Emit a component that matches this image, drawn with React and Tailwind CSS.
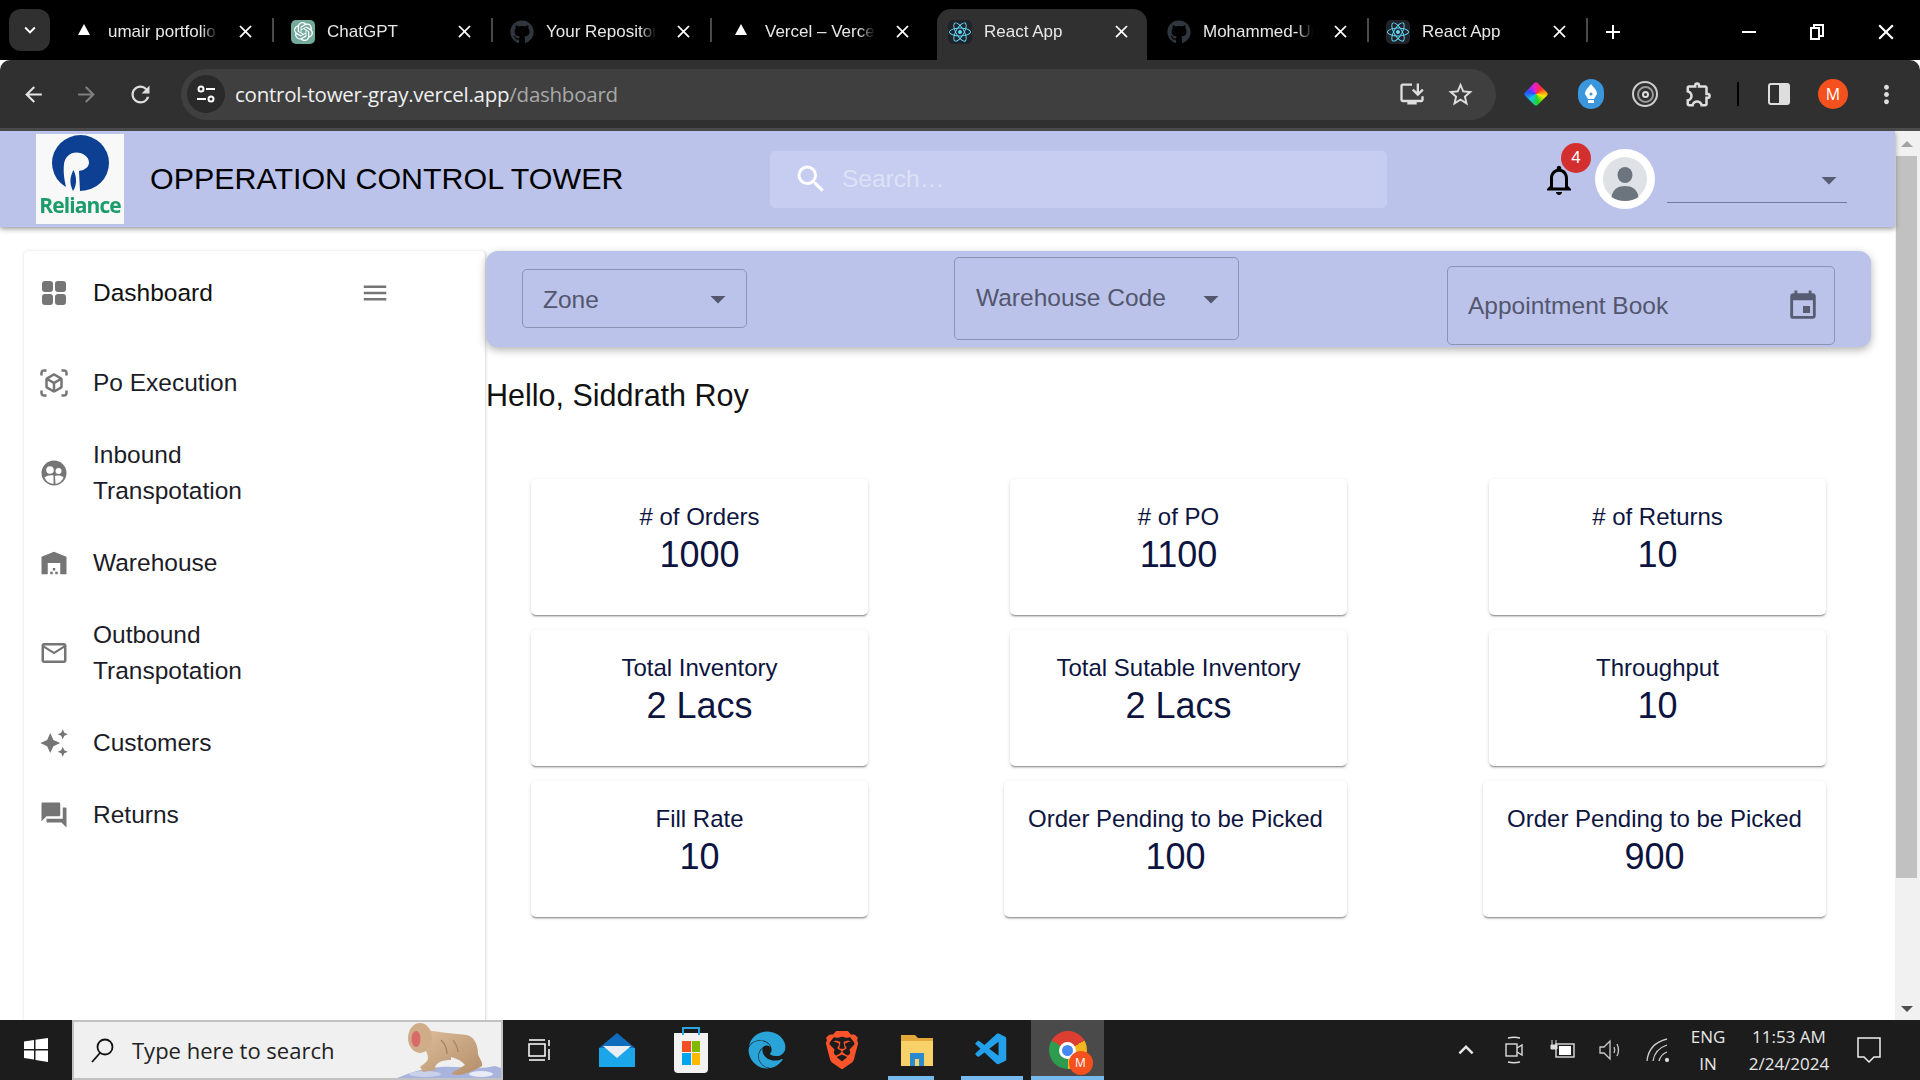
import {
  MdAdd,
  MdArrowBack,
  MdArrowDropDown,
  MdArrowForward,
  MdAutoAwesome,
  MdClose,
  MdEvent,
  MdForum,
  MdInstallDesktop,
  MdKeyboardArrowDown,
  MdKeyboardArrowUp,
  MdMailOutline,
  MdMenu,
  MdMoreVert,
  MdOutlineExtension,
  MdOutlineViewInAr,
  MdRefresh,
  MdSearch,
  MdStarBorder,
  MdWarehouse,
} from "react-icons/md";
import { FaEdge, FaGithub, FaReact } from "react-icons/fa";
import { SiBrave, SiOpenai } from "react-icons/si";
import { VscVscode } from "react-icons/vsc";

const tabs = [
  { title: "umair portfolio", icon: "vercel" },
  { title: "ChatGPT", icon: "gpt" },
  { title: "Your Repositories", icon: "github" },
  { title: "Vercel – Vercel", icon: "vercel" },
  { title: "React App", icon: "react", active: true },
  { title: "Mohammed-Umair", icon: "github" },
  { title: "React App", icon: "react" },
];

const navItems = [
  { label: "Po Execution", icon: <MdOutlineViewInAr size={30} /> },
  { label: "Inbound Transpotation", icon: <DiversityIcon /> },
  { label: "Warehouse", icon: <MdWarehouse size={30} /> },
  { label: "Outbound Transpotation", icon: <MdMailOutline size={30} /> },
  { label: "Customers", icon: <MdAutoAwesome size={30} /> },
  { label: "Returns", icon: <MdForum size={30} /> },
];

const stats = [
  { label: "# of Orders", value: "1000" },
  { label: "# of PO", value: "1100" },
  { label: "# of Returns", value: "10" },
  { label: "Total Inventory", value: "2 Lacs" },
  { label: "Total Sutable Inventory", value: "2 Lacs" },
  { label: "Throughput", value: "10" },
  { label: "Fill Rate", value: "10" },
  { label: "Order Pending to be Picked", value: "100", wide: true },
  { label: "Order Pending to be Picked", value: "900", wide: true },
];

function DiversityIcon() {
  return (
    <svg width="30" height="30" viewBox="0 0 30 30">
      <circle cx="15" cy="15" r="12.5" fill="#757575" />
      <circle cx="11" cy="12" r="3.8" fill="#fff" />
      <circle cx="19.5" cy="13" r="3" fill="#fff" />
      <path d="M5.500 19.500C8 17.500 11 17 14.500 17.500L14.500 26C10 25.500 7 23 5.500 19.500z" fill="#fff" />
      <path d="M16 18C19 17 22.500 17.500 24.500 19.500 23 23 20 25.500 16.500 26z" fill="#fff" />
    </svg>
  );
}

function TabIcon({ type }) {
  if (type === "vercel") {
    return (
      <div className="w-0 h-0 border-x-[6px] border-x-transparent border-b-[11px] border-b-white mb-1" />
    );
  }
  if (type === "gpt") {
    return (
      <div className="w-[24px] h-[24px] rounded-[5px] bg-[#74aa9c] flex items-center justify-center text-white">
        <SiOpenai size={19} />
      </div>
    );
  }
  if (type === "github") {
    return <FaGithub size={24} className="text-[#30363d]" />;
  }
  return (
    <div className="w-[24px] h-[24px] rounded-[5px] bg-[#20232a] flex items-center justify-center text-[#61dafb]">
      <FaReact size={22} />
    </div>
  );
}

function Tab({ tab, showDivider }) {
  return (
    <div className="relative w-[219px] h-[51px] flex items-center pl-[7px] pb-[6px]">
      {tab.active && <div className="absolute left-[-4px] right-[13px] top-0 bottom-0 bg-[#303030] rounded-t-[14px]" />}
      <div className="relative w-[24px] flex items-center justify-center shrink-0">
        <TabIcon type={tab.icon} />
      </div>
      <span className="relative ml-[12px] w-[110px] overflow-hidden whitespace-nowrap text-[17px] text-[#e8e8e8] [mask-image:linear-gradient(to_right,black_85%,transparent)]">
        {tab.title}
      </span>
      <MdClose size={21} className="relative ml-[17px] text-white shrink-0" />
      {showDivider && <div className="absolute right-[10px] top-[9px] h-[24px] w-[2px] bg-[#4a4a4a]" />}
    </div>
  );
}

function BrowserTabs() {
  return (
    <div className="h-[60px] bg-black flex items-end shrink-0 relative">
      <div className="absolute left-[9px] top-[9px] w-[41px] h-[42px] rounded-[12px] bg-[#303030] flex items-center justify-center text-white">
        <MdKeyboardArrowDown size={22} />
      </div>
      <div className="ml-[65px] flex">
        {tabs.map((tab, i) => (
          <Tab key={i} tab={tab} showDivider={i !== 3 && i !== 4} />
        ))}
      </div>
      <div className="h-[51px] pb-[6px] flex items-center text-white">
        <MdAdd size={24} className="ml-[3px]" />
        <div className="ml-[117px] w-[14px] h-[2px] bg-white" />
        <div className="ml-[54px] relative w-[14px] h-[16px]">
          <div className="absolute right-0 top-0 w-[11px] h-[13px] border-2 border-white" />
          <div className="absolute left-0 bottom-0 w-[10px] h-[13px] border-2 border-white bg-black" />
        </div>
        <MdClose size={26} className="ml-[49px]" />
      </div>
    </div>
  );
}

function BrowserToolbar() {
  return (
    <div className="h-[71px] bg-[#303030] border-b-[3px] border-[#4c4c4c] rounded-t-[10px] flex items-center shrink-0 text-[#dedede]">
      <MdArrowBack size={25} className="ml-[21px] text-[#e4e4e4]" />
      <MdArrowForward size={25} className="ml-[28px] text-[#7f7f7f]" />
      <MdRefresh size={27} className="ml-[28px]" />
      <div className="ml-[27px] w-[1315px] h-[51px] rounded-full bg-[#3f3f3f] flex items-center">
        <div className="ml-[6px] w-[38px] h-[38px] rounded-full bg-[#2a2a2a] flex items-center justify-center">
          <svg width="22" height="22" viewBox="0 0 22 22" fill="none" stroke="#fff" strokeWidth="2">
            <circle cx="6" cy="6" r="2.500" />
            <path d="M11 6h9M2 16h9" />
            <circle cx="16" cy="16" r="2.500" />
          </svg>
        </div>
        <span className="ml-[10px] text-[20.5px] text-[#f0f0f0] font-['Open_Sans',sans-serif] tracking-[-0.25px]">
          control-tower-gray.vercel.app<span className="text-[#a9a9a9]">/dashboard</span>
        </span>
        <MdInstallDesktop size={28} className="ml-auto" />
        <MdStarBorder size={29} className="ml-[20px] mr-[21px]" />
      </div>
      <div className="ml-[31px] w-[18px] h-[18px] rotate-45 rounded-[3px] bg-[conic-gradient(#ff2d2d,#ffe600,#21d321,#12c9e8,#2b4bff,#e81cd8,#ff2d2d)]" />
      <div className="ml-[33px] w-[26px] h-[30px] rounded-full bg-[#3a96dd] flex items-center justify-center">
        <svg width="14" height="20" viewBox="0 0 14 20" fill="#fff">
          <path d="M7 0c3 4 6 6 6 10l-3 5H4l-3-5c0-4 3-6 6-10zM4 16h6v3H4z" />
          <circle cx="7" cy="10" r="1.500" fill="#3a96dd" />
        </svg>
      </div>
      <div className="ml-[28px] w-[26px] h-[26px] rounded-full border-2 border-[#cfcfcf] flex items-center justify-center">
        <div className="w-[17px] h-[17px] rounded-full border-2 border-[#9a9a9a] flex items-center justify-center">
          <div className="w-[7px] h-[7px] rounded-full border-2 border-[#dedede]" />
        </div>
      </div>
      <MdOutlineExtension size={30} className="ml-[26px]" />
      <div className="ml-[23px] w-[2px] h-[24px] bg-black" />
      <div className="ml-[29px] w-[22px] h-[22px] rounded-[3px] border-2 border-[#dedede] flex justify-end">
        <div className="w-[9px] bg-[#dedede]" />
      </div>
      <div className="ml-[28px] w-[30px] h-[30px] rounded-full bg-[#f4511e] text-white text-[16px] flex items-center justify-center font-['Open_Sans',sans-serif]">
        M
      </div>
      <MdMoreVert size={29} className="ml-[24px]" />
    </div>
  );
}

function RelianceLogo() {
  return (
    <div className="w-[88px] h-[90px] bg-[#f7f8f7] flex flex-col items-center shrink-0">
      <svg width="57" height="56" viewBox="0 0 57 56" className="mt-[1px] mb-[2px] blur-[0.3px]">
        <ellipse cx="28.500" cy="28" rx="28.500" ry="28" fill="#0d4093" />
        <path
          d="M24.500 17.500C31 17.500 37 22 37 27.500C37 32 33 35 27 36L28 56H15C12.500 46 11 38 12 29C13 22 18 17.500 24.500 17.500z"
          fill="#f7f8f7"
        />
        <path d="M21 56C17 48 18 42 21.500 35 25 42 25 50 21 56z" fill="#0d4093" />
      </svg>
      <span className="text-[21px] leading-[24px] font-bold text-[#1b9c6a] tracking-[-0.9px] font-['Open_Sans',sans-serif] blur-[0.3px]">
        Reliance
      </span>
    </div>
  );
}

function AppHeader() {
  return (
    <div className="relative z-10 h-[96px] bg-[#bbc3ea] flex items-center shrink-0 shadow-[0_2px_5px_rgba(0,0,0,0.4)]">
      <div className="ml-[36px]">
        <RelianceLogo />
      </div>
      <h1 className="ml-[26px] w-[620px] text-[30.4px] text-black font-normal whitespace-nowrap">
        OPPERATION CONTROL TOWER
      </h1>
      <div className="w-[617px] h-[57px] rounded-[5px] bg-[#c6cdf0] flex items-center">
        <MdSearch size={36} className="ml-[23px] text-white" />
        <span className="ml-[13px] text-[24.5px] text-[#dde1f6]">Search…</span>
      </div>
      <div className="relative ml-[154px] mt-[1px] text-black">
        <svg width="36" height="36" viewBox="0 0 24 24" fill="currentColor" className="block">
          <path d="M12 22c1.100 0 2-.9 2-2h-4c0 1.100.9 2 2 2zm6-6v-5c0-3.070-1.630-5.640-4.500-6.320V4c0-.83-.67-1.500-1.500-1.500s-1.500.67-1.500 1.500v.68C7.640 5.360 6 7.920 6 11v5l-2 2v1h16v-1l-2-2zm-2 1H8v-6c0-2.480 1.510-4.500 4-4.500s4 2.020 4 4.500v6z" />
        </svg>
        <span className="absolute left-[20px] top-[-19px] w-[30px] h-[30px] rounded-full bg-[#d32f2f] text-white text-[17px] flex items-center justify-center">
          4
        </span>
      </div>
      <div className="ml-[18px] w-[60px] h-[60px] rounded-full bg-white flex items-center justify-center shrink-0">
        <svg width="44" height="44" viewBox="0 0 44 44">
          <circle cx="22" cy="22" r="22" fill="#dee2e6" />
          <ellipse cx="22" cy="18" rx="7.500" ry="8" fill="#6c757d" />
          <path d="M8.500 40c1-8 7-11 13.500-11s12.500 3 13.500 11c-3.800 2.600-8.500 4-13.500 4s-9.700-1.400-13.500-4z" fill="#6c757d" />
        </svg>
      </div>
      <div className="ml-[12px] w-[180px] h-[46px] mt-[2px] border-b-[1.5px] border-[#70789c] flex justify-end items-center text-[#585c72]">
        <MdArrowDropDown size={36} />
      </div>
    </div>
  );
}

function Sidebar() {
  return (
    <aside className="ml-[24px] w-[462px] shrink-0 bg-white rounded-t-[4px] border-r border-[#e4e4e4] pt-[6px] shadow-[0_0_3px_rgba(0,0,0,0.14)]">
      <div className="h-[72px] mb-[18px] flex items-center pl-[15px] text-[#757575]">
        <svg width="30" height="30" viewBox="0 0 30 30" fill="#757575">
          <rect x="3" y="3" width="11" height="11" rx="3" />
          <rect x="16" y="3" width="11" height="11" rx="3" />
          <rect x="3" y="16" width="11" height="11" rx="3" />
          <rect x="16" y="16" width="11" height="11" rx="3" />
        </svg>
        <span className="ml-[24px] w-[267px] text-[24.5px] leading-[36px] text-[#111]">Dashboard</span>
        <MdMenu size={30} />
      </div>
      {navItems.map((item) => (
        <div key={item.label} className="flex items-center py-[18px] pl-[15px] text-[#757575]">
          {item.icon}
          <span className="ml-[24px] w-[200px] text-[24.5px] leading-[36px] text-[#1c1c28]">{item.label}</span>
        </div>
      ))}
    </aside>
  );
}

function FilterBar() {
  return (
    <div className="w-[1385px] h-[96px] rounded-[12px] bg-[#bbc3ea] flex items-start text-[24.5px] text-[#54566e] shadow-[0_3px_8px_rgba(0,0,0,0.3)]">
      <div className="ml-[36px] mt-[18px] w-[225px] h-[59px] rounded-[5px] border border-[#8b92b4] flex items-center pl-[20px] pr-[10px]">
        <span className="flex-1 pt-[4px]">Zone</span>
        <MdArrowDropDown size={36} />
      </div>
      <div className="ml-[207px] mt-[6px] w-[285px] h-[83px] rounded-[5px] border border-[#8b92b4] flex items-center pl-[21px] pr-[9px]">
        <span className="flex-1">Warehouse Code</span>
        <MdArrowDropDown size={36} />
      </div>
      <div className="ml-[208px] mt-[15px] w-[388px] h-[79px] rounded-[5px] border border-[#8b92b4] flex items-center pl-[20px] pr-[14px]">
        <span className="flex-1 pt-[2px]">Appointment Book</span>
        <MdEvent size={34} className="text-[#585c72]" />
      </div>
    </div>
  );
}

function StatCard({ stat, shifted }) {
  return (
    <div
      className={
        "h-[136px] rounded-[5px] bg-white pt-[20px] text-center text-[#0d1440] shadow-[0_2px_2px_-1px_rgba(0,0,0,0.45),0_1px_4px_0_rgba(0,0,0,0.12)] " +
        (shifted ? "ml-[-6px]" : "")
      }
    >
      <div className="text-[24px] leading-[36px] whitespace-nowrap">{stat.label}</div>
      <div className="text-[36px] leading-[39px]">{stat.value}</div>
    </div>
  );
}

function Dashboard() {
  return (
    <main className="flex-1 min-w-0">
      <FilterBar />
      <h2 className="mt-[30px] text-[30.5px] leading-[36px] font-normal text-[#111]">Hello, Siddrath Roy</h2>
      <div className="mt-[66px] ml-[45px] grid grid-cols-[337px_337px_337px] gap-x-[142px] gap-y-[15px]">
        {stats.map((stat, i) => (
          <StatCard key={i} stat={stat} shifted={stat.wide} />
        ))}
      </div>
    </main>
  );
}

function Scrollbar() {
  return (
    <div className="w-[25px] shrink-0 bg-[#f1f1f1] flex flex-col items-center pr-[2px]">
      <div className="h-[25px] flex items-center">
        <div className="w-0 h-0 border-x-[6px] border-x-transparent border-b-[6px] border-b-[#a3a3a3]" />
      </div>
      <div className="w-[21px] h-[722px] bg-[#c1c1c1]" />
      <div className="flex-1 flex items-end pb-[8px]">
        <div className="w-0 h-0 border-x-[6px] border-x-transparent border-t-[6px] border-t-[#505050]" />
      </div>
    </div>
  );
}

function WinLogo() {
  return (
    <svg width="26" height="26" viewBox="0 0 26 26" fill="#fff">
      <polygon points="1,4.500 11,3 11,12 1,12" />
      <polygon points="12.500,2.800 25,1 25,12 12.500,12" />
      <polygon points="1,13.500 11,13.500 11,22.500 1,21" />
      <polygon points="12.500,13.500 25,13.500 25,25 12.500,23" />
    </svg>
  );
}

function Monkey() {
  return (
    <svg width="106" height="56" viewBox="0 2 106 56" className="absolute right-0 top-0">
      <defs>
        <linearGradient id="fur" x1="0" y1="0" x2="1" y2="1">
          <stop offset="0" stopColor="#dcbd9c" />
          <stop offset="1" stopColor="#b58e69" />
        </linearGradient>
      </defs>
      <path d="M0 59C15 52 30 48 45 47 65 46 85 50 100 46 104 47 108 49 110 50V60H0z" fill="#a9b4de" />
      <ellipse cx="86" cy="54" rx="12" ry="3" fill="#e8ecf7" />
      <ellipse cx="30" cy="54" rx="16" ry="3" fill="#c9d0ea" />
      <path
        d="M30 10C45 12 60 14 72 15 80 17 83 26 83 34 84 38 88 42 87 46 80 50 70 55 62 55L56 54C60 50 66 48 70 45 66 40 60 38 56 37L56 40C50 40 42 41 40 47L41 50 28 52 25 47C28 44 33 42 33 38 33 34 30 30 30 28z"
        fill="url(#fur)"
      />
      <ellipse cx="25" cy="18" rx="12" ry="15" fill="#d0ad89" />
      <ellipse cx="21" cy="19" rx="4.500" ry="8" fill="#d96a6a" />
      <path d="M46 20c4 4 6 8 6 14M58 20c3 4 5 8 5 12" stroke="#a87f5c" strokeWidth="1.200" fill="none" />
    </svg>
  );
}

function Taskbar() {
  return (
    <div className="h-[60px] bg-[#1c1c1c] flex items-stretch shrink-0 text-white">
      <div className="w-[72px] flex items-center justify-center">
        <WinLogo />
      </div>
      <div className="relative w-[431px] bg-[#f0f0f0] border-2 border-[#c2c2c2] flex items-center overflow-hidden">
        <svg width="28" height="28" viewBox="0 0 28 28" fill="none" stroke="#111" strokeWidth="1.800" className="ml-[14px]">
          <circle cx="17" cy="11" r="7.500" />
          <path d="M12 17L4 26" />
        </svg>
        <span className="ml-[16px] text-[22px] text-[#222] font-['Open_Sans',sans-serif]">Type here to search</span>
        <Monkey />
      </div>
      <div className="w-[72px] flex items-center justify-center">
        <svg width="26" height="26" viewBox="0 0 26 26" fill="none" stroke="#fff" strokeWidth="1.500">
          <path d="M3 3h16M3 23h16M3 7h16v12H3zM23 3v6M23 12v11" />
        </svg>
      </div>
      <div className="w-[84px] flex items-center justify-center">
        <svg width="36" height="36" viewBox="0 0 36 36">
          <path d="M18 1L36 16v19H0V16z" fill="#0f6cbd" />
          <path d="M0 16h36v19H0z" fill="#1aa6e8" />
          <path d="M4 14h28L18 26z" fill="#e8eef4" />
        </svg>
      </div>
      <div className="w-[64px] flex items-center justify-center">
        <div className="relative w-[34px] h-[40px] bg-[#f2f2f2] rounded-b-[4px] mt-[5px] grid grid-cols-2 gap-[1px] p-[8px]">
          <div className="absolute left-[8px] top-[-6px] w-[18px] h-[8px] border-2 border-b-0 border-[#2aa7e0]" />
          <div className="bg-[#f25022]" />
          <div className="bg-[#7fba00]" />
          <div className="bg-[#00a4ef]" />
          <div className="bg-[#ffb900]" />
        </div>
      </div>
      <div className="w-[88px] flex items-center justify-center">
        <FaEdge size={38} className="text-[#2aa3d9]" />
      </div>
      <div className="w-[62px] flex items-center justify-center">
        <SiBrave size={38} className="text-[#fb542b]" />
      </div>
      <div className="relative w-[88px] flex items-center justify-center">
        <svg width="34" height="34" viewBox="0 0 34 34">
          <path d="M1 2h14l3 3h15v28H1z" fill="#e3a83a" />
          <path d="M1 8h32v25H1z" fill="#f8d268" />
          <path d="M10 33V20h14v13h-5v-7h-4v7z" fill="#2a89cf" />
        </svg>
        <div className="absolute left-[15px] right-[27px] bottom-0 h-[4px] bg-[#76b9ed]" />
      </div>
      <div className="relative w-[62px] flex items-center justify-center">
        <VscVscode size={38} className="text-[#22a1ea]" />
        <div className="absolute left-0 right-0 bottom-0 h-[4px] bg-[#76b9ed]" />
      </div>
      <div className="relative ml-[8px] w-[73px] bg-[#4a4a4a] flex items-center justify-center">
        <div className="relative w-[38px] h-[38px] rounded-full bg-[conic-gradient(#dc3e31_0deg,#dc3e31_60deg,#f2b620_60deg,#f2b620_180deg,#2e9c4f_180deg,#2e9c4f_300deg,#dc3e31_300deg)] flex items-center justify-center">
          <div className="w-[17px] h-[17px] rounded-full bg-[#4688f1] border-[3px] border-white" />
          <div className="absolute right-[-6px] bottom-[-6px] w-[24px] h-[24px] rounded-full bg-[#f4511e] text-white text-[12px] flex items-center justify-center font-['Open_Sans',sans-serif]">
            M
          </div>
        </div>
        <div className="absolute left-0 right-0 bottom-0 h-[4px] bg-[#76b9ed]" />
      </div>
      <div className="flex-1 flex items-center text-[#e8e8e8] font-['Open_Sans',sans-serif]">
        <MdKeyboardArrowUp size={30} className="ml-[347px]" />
        <svg width="22" height="28" viewBox="0 0 22 28" fill="none" stroke="#ddd" strokeWidth="1.400" className="ml-[22px]">
          <rect x="3" y="8" width="11" height="12" />
          <path d="M14 12l5-3v10l-5-3M5 2c4-1 8-1 12 0M5 26c4 1 8 1 12 0" />
        </svg>
        <svg width="26" height="24" viewBox="0 0 26 24" className="ml-[24px]">
          <rect x="7" y="6" width="18" height="13" fill="none" stroke="#ddd" strokeWidth="1.400" />
          <rect x="10" y="8" width="12" height="9" fill="#fff" />
          <path d="M3 2v5M7 2v5M2 7h6v4H2z" stroke="#ddd" fill="#ddd" />
        </svg>
        <svg width="26" height="26" viewBox="0 0 26 26" fill="none" stroke="#ccc" strokeWidth="1.300" className="ml-[22px]">
          <path d="M3 10h4l6-6v18l-6-6H3zM17 10c1 2 1 4 0 6M20 7c2 4 2 8 0 12" />
        </svg>
        <svg width="26" height="26" viewBox="0 0 26 26" fill="none" stroke="#ccc" strokeWidth="1.300" className="ml-[22px]">
          <path d="M2 24C3 13 10 5 22 2M8 24C9 17 13 11 22 8M14 24c1-4 3-7 8-9" />
          <circle cx="22" cy="23" r="1.500" fill="#fff" />
        </svg>
        <div className="ml-[12px] w-[50px] text-center text-[17px] leading-[27px]">
          <div>ENG</div>
          <div>IN</div>
        </div>
        <div className="ml-[1px] w-[110px] text-center text-[17px] leading-[27px] whitespace-nowrap">
          <div>11:53 AM</div>
          <div>2/24/2024</div>
        </div>
        <svg width="26" height="28" viewBox="0 0 26 28" fill="none" stroke="#eee" strokeWidth="1.500" className="ml-[12px]">
          <path d="M2 2h22v19h-6l-5 5-5-5H2z" />
        </svg>
      </div>
    </div>
  );
}

export default function App() {
  return (
    <div className="h-screen w-full overflow-hidden flex flex-col bg-white font-['Liberation_Sans',Arial,sans-serif]">
      <BrowserTabs />
      <BrowserToolbar />
      <div className="flex flex-1 min-h-0">
        <div className="flex-1 min-w-0 flex flex-col">
          <AppHeader />
          <div className="flex flex-1 min-h-0 pt-[24px]">
            <Sidebar />
            <Dashboard />
          </div>
        </div>
        <Scrollbar />
      </div>
      <Taskbar />
    </div>
  );
}
